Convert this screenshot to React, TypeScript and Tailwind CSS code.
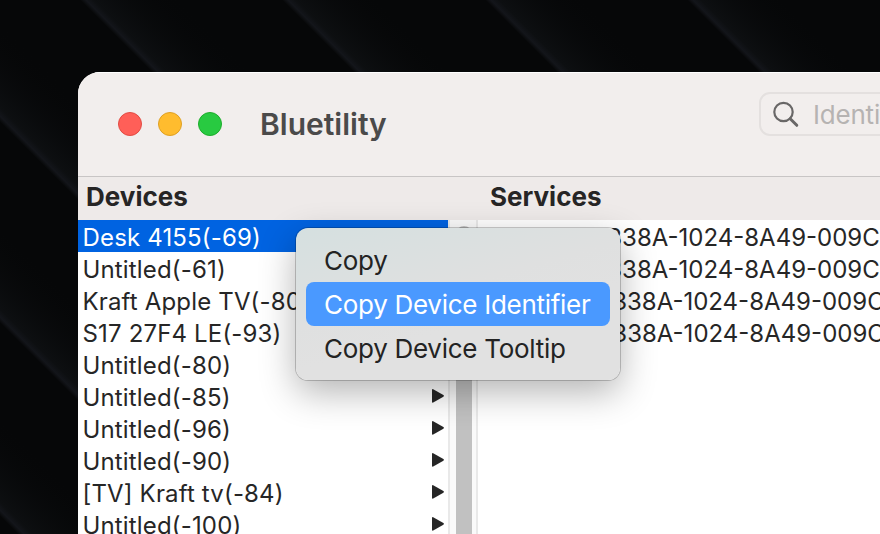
import React from "react";

type Device = { name: string; selected?: boolean };

const devices: Device[] = [
  { name: "Desk 4155(-69)", selected: true },
  { name: "Untitled(-61)" },
  { name: "Kraft Apple TV(-80)" },
  { name: "S17 27F4 LE(-93)" },
  { name: "Untitled(-80)" },
  { name: "Untitled(-85)" },
  { name: "Untitled(-96)" },
  { name: "Untitled(-90)" },
  { name: "[TV] Kraft tv(-84)" },
  { name: "Untitled(-100)" },
];

const services = [
  "99FA0001-338A-1024-8A49-009C",
  "99FA0010-338A-1024-8A49-009C",
  "99FA0020-338A-1024-8A49-009C",
  "99FA0030-338A-1024-8A49-009C",
];

function Wallpaper() {
  const folds = [-516, -323, -122, 80, 282, 485, 687];
  return (
    <svg className="absolute inset-0" width="880" height="534" viewBox="0 0 880 534">
      <defs>
        <linearGradient id="fold" gradientUnits="userSpaceOnUse" x1="0" y1="0" x2="50" y2="-50">
          <stop offset="0" stopColor="#15171b" stopOpacity="0" />
          <stop offset="0.06" stopColor="#13151a" />
          <stop offset="0.14" stopColor="#0d0f11" />
          <stop offset="1" stopColor="#060708" stopOpacity="0" />
        </linearGradient>
      </defs>
      <rect width="880" height="534" fill="#060708" />
      {folds.map((x) => (
        <path key={x} d="M0 0L540 540H660L120 0z" transform={`translate(${x})`} fill="url(#fold)" />
      ))}
    </svg>
  );
}

function TitleBar() {
  return (
    <header className="flex h-[105px] shrink-0 items-start border-b border-[#c8c5c5] bg-[#f2eeed] pl-10 shadow-[inset_0_1px_0_#fff]">
      <div className="flex gap-4 pt-10">
        <span className="size-6 rounded-full border border-[#e24b43] bg-[#ff5f58]" />
        <span className="size-6 rounded-full border border-[#dfa023] bg-[#ffbc2e]" />
        <span className="size-6 rounded-full border border-[#1dad2b] bg-[#28ca41]" />
      </div>
      <h1 className="ml-[38px] mt-[34px] w-[499px] shrink-0 text-[30px] leading-9 font-semibold text-[#4b4a4a]">
        Bluetility
      </h1>
      <div className="mt-5 flex h-11 w-[320px] shrink-0 items-center rounded-[11px] border-2 border-[#e4e0df]">
        <svg className="mt-0.5 ml-3 shrink-0" width="28" height="28" viewBox="0 0 28 28" fill="none" stroke="#696767">
          <circle cx="10.5" cy="11" r="9.2" strokeWidth="2.2" />
          <path d="M17.2 17.7l6.6 6.6" strokeWidth="3" strokeLinecap="round" />
        </svg>
        <span className="mt-0.5 ml-3 text-[26px] leading-8 tracking-[-0.2px] text-[#b6b3b2]">Identifier</span>
      </div>
    </header>
  );
}

function DeviceRow({ name, selected }: Device) {
  return (
    <li
      className={`flex h-8 shrink-0 items-center justify-between pr-[3px] pl-[4.5px] ${
        selected ? "bg-[#0063e1] text-white" : "text-[#262626]"
      }`}
    >
      <span className="pt-1">{name}</span>
      <svg width="14" height="16" viewBox="0 0 14 16" fill={selected ? "#fff" : "#262626"}>
        <path d="M1 2Q1 .8 2.2 1.2L12.4 7.1Q13.6 7.9 12.4 8.7L2.2 14.6Q1 15 1 13.8z" />
      </svg>
    </li>
  );
}

function ContextMenu() {
  return (
    <div className="absolute left-[296px] top-[228px] flex h-[152px] w-[324px] flex-col rounded-xl bg-[linear-gradient(165deg,#d5e0e0_0%,#dfe0e0_42%,#e1e1e1_60%)] px-2.5 py-2.5 text-[26px] tracking-[-0.28px] text-[#232323] shadow-[0_0_0_1px_rgba(0,0,0,0.2),0_12px_36px_rgba(0,0,0,0.3)]">
      <div className="flex h-11 items-center rounded-lg pl-[18px]">Copy</div>
      <div className="flex h-11 items-center rounded-lg bg-[#4a99ff] pl-[18px] text-white">Copy Device Identifier</div>
      <div className="flex h-11 items-center rounded-lg pl-[18px]">Copy Device Tooltip</div>
    </div>
  );
}

export default function App() {
  return (
    <div className="relative h-[534px] w-[880px] overflow-hidden bg-[#060708] pt-[72px] pl-[78px] font-['Inter',sans-serif] whitespace-nowrap">
      <Wallpaper />
      <main className="relative flex h-[480px] w-[900px] flex-col overflow-hidden rounded-tl-[22px] bg-white">
        <TitleBar />
        <div className="flex h-[43px] shrink-0 bg-[#eeeae9] text-[26px] leading-10 font-bold text-[#262525]">
          <h2 className="w-[404px] pl-2">Devices</h2>
          <h2 className="pl-2">Services</h2>
        </div>
        <div className="flex flex-1 text-[24px] leading-8 tracking-[0.16px]">
          <ul className="flex w-[370px] shrink-0 flex-col">
            {devices.map((d, i) => (
              <DeviceRow key={i} {...d} />
            ))}
          </ul>
          <div className="flex w-[30px] shrink-0 border-x-2 border-[#e9e9e9] bg-[#fafafa] pt-1.5 pl-1.5">
            <div className="h-[400px] w-4 rounded-full bg-[#c1c1c1]" />
          </div>
          <ul className="flex flex-col pt-0.5 pl-[5px] tracking-normal text-[#262626]">
            {services.map((s) => (
              <li key={s} className="h-8">{s}</li>
            ))}
          </ul>
        </div>
      </main>
      <ContextMenu />
    </div>
  );
}
